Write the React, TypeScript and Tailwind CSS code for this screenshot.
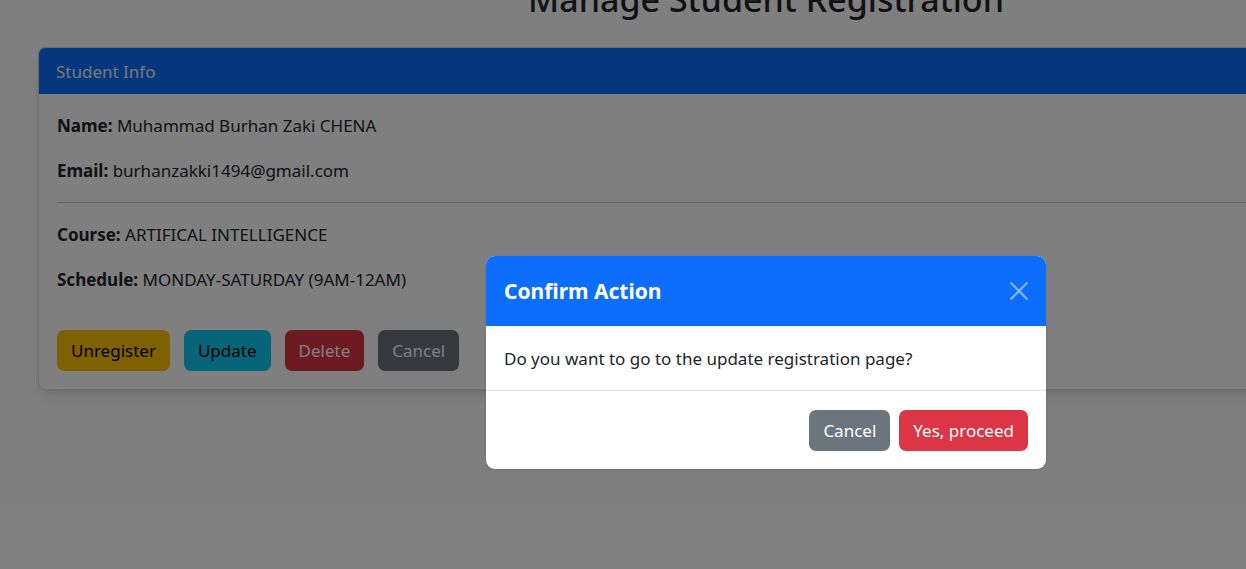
export default function App() {
  return (
    <div className="relative w-[1246px] h-[569px] overflow-hidden bg-white text-[17px] leading-[27px] text-[#212529] font-['Noto_Sans',sans-serif]">
      <div className="ml-[38px] w-[1456px]">
        <h1 className="-mt-[21px] h-[48px] text-center text-[34px] leading-[41px] font-medium">Manage Student Registration</h1>

        <div className="mt-[20px] rounded-[7px] border border-black/15 shadow-lg overflow-hidden">
          <div className="h-[46px] flex items-center px-[17px] bg-[#0d6efd] text-[#f1f1f1]">Student Info</div>
          <div className="p-[18px]">
            <p className="mb-[18px]"><b>Name:</b> Muhammad Burhan Zaki CHENA</p>
            <p className="mb-[18px]"><b>Email:</b> burhanzakki1494@gmail.com</p>
            <hr className="my-[18px] border-t border-[#212529]/25" />
            <p className="mb-[18px]"><b>Course:</b> ARTIFICAL INTELLIGENCE</p>
            <p><b>Schedule:</b> MONDAY-SATURDAY (9AM-12AM)</p>
            <div className="mt-[37px] flex gap-[14px]">
              <button className="h-[41px] px-[14px] rounded-[7px] bg-[#ffc107] text-black">Unregister</button>
              <button className="h-[41px] px-[14px] rounded-[7px] bg-[#0dcaf0] text-black">Update</button>
              <button className="h-[41px] px-[14px] rounded-[7px] bg-[#dc3545] text-white">Delete</button>
              <button className="h-[41px] px-[14px] rounded-[7px] bg-[#6c757d] text-white">Cancel</button>
            </div>
          </div>
        </div>
      </div>

      <div className="absolute inset-0 bg-black/50" />

      <div className="absolute left-[486px] top-[256px] w-[560px] rounded-[9px] bg-white overflow-hidden shadow">
        <div className="h-[70px] flex items-center justify-between px-[18px] bg-[#0d6efd] text-white">
          <h5 className="text-[21px] font-bold">Confirm Action</h5>
          <svg width="20" height="20" viewBox="0 0 20 20" className="mr-[-1px] opacity-50">
            <path d="M1.5 1.5 L18.5 18.5 M18.5 1.5 L1.5 18.5" stroke="white" strokeWidth="2" />
          </svg>
        </div>
        <div className="px-[18px] pt-[19px] pb-[18px] border-b border-[#dee2e6]">Do you want to go to the update registration page?</div>
        <div className="flex justify-end gap-[9px] px-[18px] pt-[19px] pb-[18px]">
          <button className="h-[41px] px-[14px] rounded-[7px] bg-[#6c757d] text-white">Cancel</button>
          <button className="h-[41px] px-[14px] rounded-[7px] bg-[#dc3545] text-white">Yes, proceed</button>
        </div>
      </div>
    </div>
  )
}
